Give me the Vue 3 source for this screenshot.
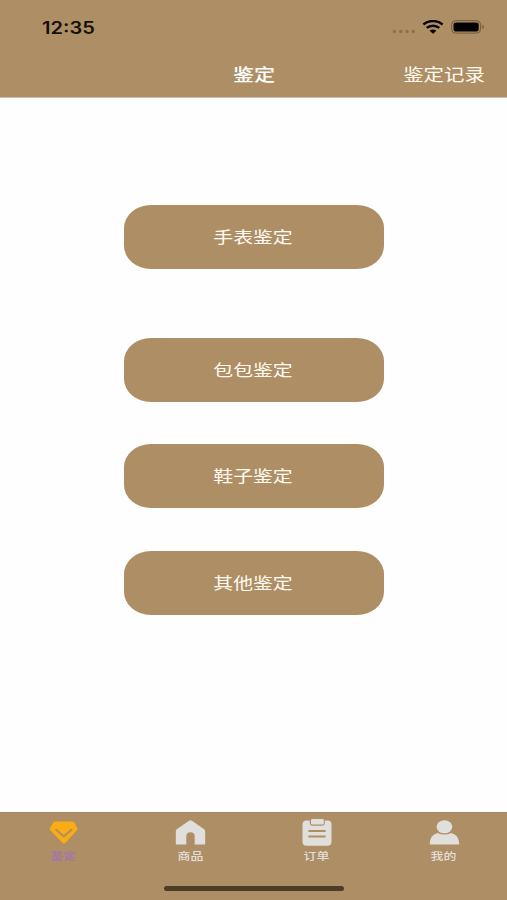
<script setup>
const actions = ['手表鉴定', '包包鉴定', '鞋子鉴定', '其他鉴定']
const tabs = [
  { key: 'appraise', label: '鉴定', active: true },
  { key: 'goods', label: '商品' },
  { key: 'orders', label: '订单' },
  { key: 'mine', label: '我的' },
]
</script>

<template>
  <div class="screen">
    <header class="header">
      <div class="status">
        <span class="time">12:35</span>
        <div class="indicators">
          <svg class="dots" width="24" height="5" viewBox="0 0 24 5">
            <circle cx="2.4" cy="2.5" r="1.7" /><circle cx="8.7" cy="2.5" r="1.7" />
            <circle cx="15" cy="2.5" r="1.7" /><circle cx="21.3" cy="2.5" r="1.7" />
          </svg>
          <svg class="wifi" width="22" height="14" viewBox="0 0 22 14">
            <path d="M1.4 4.5C6.8-.1 15.2-.1 20.6 4.5" />
            <path d="M4.7 7.9c3.6-3 9-3 12.6 0" />
            <path class="core" d="M7.6 10.8c2.1-1.7 4.7-1.7 6.8 0L11 13.8z" />
          </svg>
          <svg class="battery" width="34" height="14" viewBox="0 0 34 14">
            <rect class="case" x=".6" y=".7" width="29" height="12.4" rx="4" />
            <rect x="2.5" y="2.4" width="25.2" height="9" rx="2.2" />
            <path class="cap" d="M31.3 4.8c2 .7 2 3.7 0 4.4z" />
          </svg>
        </div>
      </div>
      <nav class="navbar">
        <h1 class="title"><span>鉴定</span></h1>
        <a class="record"><span>鉴定记录</span></a>
      </nav>
    </header>

    <main class="content">
      <button v-for="name in actions" :key="name" class="action"><span>{{ name }}</span></button>
    </main>

    <footer class="footer">
      <div class="tabs">
        <div v-for="tab in tabs" :key="tab.key" class="tab" :class="{ active: tab.active }">
          <svg class="icon" width="32" height="28" viewBox="0 0 32 28">
            <template v-if="tab.key === 'appraise'">
              <path d="M8 2.4h17.6q1 0 1.6.8l3.1 6.1q.5 1-.4 1.9L18.3 23.9q-1.3 1.2-2.6 0L3.3 11.2q-.9-.9-.4-1.9L6.4 3.2q.6-.8 1.6-.8z" />
              <path class="cut" d="M8.6 10.2l8.2 7.2 8.2-7.2" />
            </template>
            <template v-else-if="tab.key === 'goods'">
              <path d="M15.1 1.8q1.4-1 2.8 0l12 8.2q1.3 1 1.3 2.4v12q0 1-1 1H20.7V17q0-3.8-4.2-3.8T12.3 17v8.4H2.8q-1 0-1-1v-12Q1.8 11 3.1 10z" />
            </template>
            <template v-else-if="tab.key === 'orders'">
              <path d="M5.5 1.5h3.2v2.2q0 3 3 3h9.1q3 0 3-3V1.5h2.7q4 0 4 4v17.3q0 4-4 4h-21q-4 0-4-4V5.5q0-4 4-4z" />
              <rect x="10" y="0" width="12.8" height="5.5" rx="1.2" />
              <path class="cut" d="M7.4 12.1h17.2M7.4 17.6h17.2" />
            </template>
            <template v-else>
              <ellipse cx="16.4" cy="7.8" rx="7.9" ry="6.5" />
              <path d="M9.6 14q6.8 3.2 13.6 0 8 2 8 11.4H1.7Q1.7 16 9.6 14z" />
            </template>
          </svg>
          <span class="label">{{ tab.label }}</span>
        </div>
      </div>
      <div class="home-bar"></div>
    </footer>
  </div>
</template>

<style>
body {
  margin: 0;
  background: #fff;
}
</style>

<style scoped>
.screen {
  width: 507px;
  height: 900px;
  display: flex;
  flex-direction: column;
  background: #fefefe;
  font-family: "Noto Sans CJK SC", sans-serif;
}
.header {
  box-sizing: border-box;
  height: 98px;
  background: #ae8f65;
  border-bottom: 1px solid #d3bdab;
}
.status {
  box-sizing: border-box;
  height: 53px;
  padding: 0 22px 0 42px;
  display: flex;
  align-items: center;
  justify-content: space-between;
}
.time {
  margin-top: 2px;
  font: 600 17px/20px Inter, sans-serif;
  color: #16100a;
  transform: scaleX(1.18);
  transform-origin: left;
}
.indicators {
  display: flex;
  align-items: center;
}
.dots {
  margin: 9px 6px 0 0;
  fill: #8b7150;
}
.wifi {
  margin-right: 7px;
  fill: none;
  stroke: #080604;
  stroke-width: 2.5;
}
.wifi .core {
  fill: #080604;
  stroke: none;
}
.battery .case {
  fill: none;
  stroke: #6f5b40;
  stroke-width: 1;
}
.battery .cap {
  fill: #6f5b40;
}
.navbar {
  height: 42px;
  padding: 0 22px;
  display: grid;
  grid-template-columns: 1fr auto 1fr;
  align-items: center;
  color: #fff;
}
.title {
  grid-column: 2;
  margin: 0;
  font-size: 17px;
  line-height: 26px;
  font-weight: 500;
}
.title span,
.record span,
.action span {
  display: inline-block;
  transform: scaleX(1.24);
}
.record {
  justify-self: end;
  font-size: 16.5px;
  line-height: 26px;
  color: #fff9f0;
}
.record span {
  transform-origin: right;
}
.content {
  flex: 1;
  padding-top: 106.5px;
  display: flex;
  flex-direction: column;
  align-items: center;
  gap: 42.5px;
}
.action {
  width: 260px;
  height: 64px;
  flex: none;
  padding: 0 1px 2px 0;
  border: 0;
  border-radius: 27px / 23px;
  background: #ae8f65;
  color: #fff9f0;
  font: 400 16px/24px "Noto Sans CJK SC", sans-serif;
}
.action:first-child {
  margin-bottom: 26.5px;
}
.footer {
  box-sizing: border-box;
  height: 88.5px;
  padding-top: 6px;
  background: #ae8f65;
  border-top: 1px solid #a38862;
}
.tabs {
  display: flex;
  height: 67px;
}
.tab {
  flex: 1;
  display: flex;
  flex-direction: column;
  align-items: center;
  color: #e1dfdc;
}
.icon {
  fill: currentColor;
}
.icon .cut {
  fill: none;
  stroke: #ae8f65;
  stroke-width: 2;
}
.label {
  margin-top: 1px;
  font-size: 10.4px;
  line-height: 16px;
  font-weight: 500;
  transform: scaleX(1.24);
}
.active .icon {
  fill: #f9ac14;
}
.active .label {
  color: #a675a7;
  font-weight: 700;
}
.home-bar {
  width: 180px;
  height: 5px;
  margin: 0 auto;
  border-radius: 3px;
  background: #4c3d2b;
}
</style>
